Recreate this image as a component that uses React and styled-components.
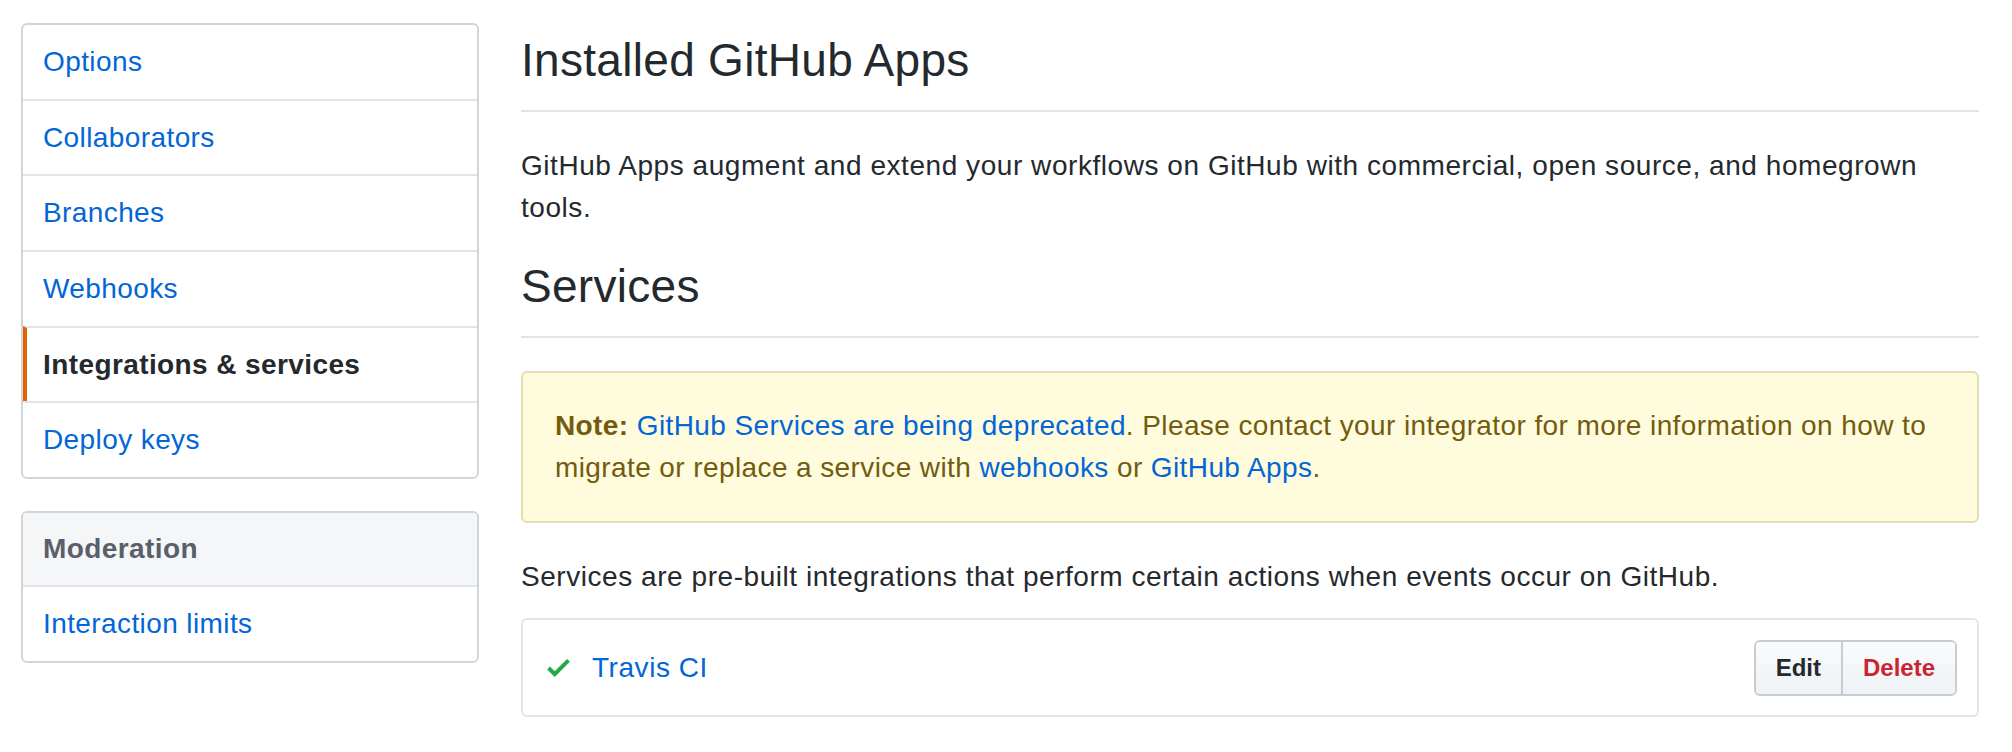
import styled, { createGlobalStyle } from 'styled-components'

const GlobalStyle = createGlobalStyle`
	body {
		margin: 0;
		background: #fff;
		font-family: "Liberation Sans", Arial, sans-serif;
		color: #24292e;
	}
`

const Page = styled.div`
	display: grid;
	grid-template-columns: 458px 1fr;
	column-gap: 42px;
	padding: 23px 33px 0 21px;
	font-size: 28px;
	line-height: 42px;
	letter-spacing: 0.55px;
`

const Sidebar = styled.nav`
	display: flex;
	flex-direction: column;
	gap: 32px;
	letter-spacing: 0.4px;
`

const Menu = styled.div`
	border: 2px solid #d1d5da;
	border-radius: 6px;
	overflow: hidden;
	background: #fff;
`

const MenuHeading = styled.div`
	padding: 15px 20px;
	background: #f5f6f8;
	color: #586069;
	font-weight: bold;
	border-bottom: 2px solid #e1e4e8;
`

const MenuItem = styled.a`
	display: block;
	padding: 16px 20px 15.7px;
	color: ${(p) => (p.$selected ? '#24292e' : '#0366d6')};
	font-weight: ${(p) => (p.$selected ? 'bold' : 'normal')};
	text-decoration: none;
	border-left: ${(p) => (p.$selected ? '4px solid #e36209' : 'none')};
	padding-left: ${(p) => (p.$selected ? '16px' : '20px')};

	& + & {
		border-top: 2px solid #e1e4e8;
	}
`

const Main = styled.main`
	min-width: 0;
`

const Subhead = styled.div`
	padding: ${(p) => (p.$first ? '7px' : '0')} 0 20px;
	margin-bottom: 33px;
	border-bottom: 2px solid #e1e4e8;
`

const SubheadTitle = styled.h2`
	margin: 0;
	font-size: 46px;
	line-height: 60px;
	font-weight: normal;
	letter-spacing: 0.3px;
	color: #24292e;
`

const Text = styled.p`
	margin: 0 0 ${(p) => p.$mb || '27px'};
`

const Link = styled.a`
	color: #0366d6;
	text-decoration: none;
`

const Flash = styled.div`
	padding: 32px;
	margin-bottom: 33px;
	background: #fffbdd;
	border: 2px solid #e4dfb3;
	border-radius: 6px;
	color: #735c0f;
	letter-spacing: 0.4px;
`

const ServiceList = styled.div`
	border: 2px solid #e1e4e8;
	border-radius: 6px;
`

const ServiceRow = styled.div`
	display: flex;
	align-items: center;
	padding: 20px 20px 19px 24px;
`

const CheckIcon = styled.svg`
	flex: none;
	width: 23px;
	height: 18px;
	margin-right: 22px;
	fill: #28a745;
`

const ServiceName = styled(Link)`
	flex: 1;
`

const BtnGroup = styled.div`
	display: flex;
	border: 2px solid #c8ccd1;
	border-radius: 6px;
	overflow: hidden;
`

const Btn = styled.button`
	font-family: inherit;
	font-size: 24px;
	font-weight: bold;
	line-height: 40px;
	letter-spacing: 0;
	padding: 6px 20px;
	border: none;
	background: linear-gradient(#fafbfc, #eff3f6 90%);
	color: ${(p) => (p.$danger ? '#cb2431' : '#24292e')};
	cursor: pointer;

	& + & {
		border-left: 2px solid #c8ccd1;
	}
`

const menuItems = ['Options', 'Collaborators', 'Branches', 'Webhooks', 'Integrations & services', 'Deploy keys']

const App = () => {
	return (
		<>
			<GlobalStyle />
			<Page>
				<Sidebar>
					<Menu>
						{menuItems.map((item) => (
							<MenuItem key={item} $selected={item === 'Integrations & services'}>
								{item}
							</MenuItem>
						))}
					</Menu>
					<Menu>
						<MenuHeading>Moderation</MenuHeading>
						<MenuItem>Interaction limits</MenuItem>
					</Menu>
				</Sidebar>

				<Main>
					<Subhead $first>
						<SubheadTitle>Installed GitHub Apps</SubheadTitle>
					</Subhead>
					<Text>
						GitHub Apps augment and extend your workflows on GitHub with commercial, open source, and
						homegrown tools.
					</Text>

					<Subhead>
						<SubheadTitle>Services</SubheadTitle>
					</Subhead>
					<Flash>
						<strong>Note:</strong> <Link>GitHub Services are being deprecated</Link>. Please contact
						your integrator for more information on how to migrate or replace a service with{' '}
						<Link>webhooks</Link> or <Link>GitHub Apps</Link>.
					</Flash>
					<Text $mb="20px">
						Services are pre-built integrations that perform certain actions when events occur on
						GitHub.
					</Text>

					<ServiceList>
						<ServiceRow>
							<CheckIcon viewBox="0 3.5 12 9.5">
								<path d="M12 5l-8 8-4-4 1.5-1.5L4 10l6.5-6.5L12 5z" />
							</CheckIcon>
							<ServiceName>Travis CI</ServiceName>
							<BtnGroup>
								<Btn>Edit</Btn>
								<Btn $danger>Delete</Btn>
							</BtnGroup>
						</ServiceRow>
					</ServiceList>
				</Main>
			</Page>
		</>
	)
}

export default App
